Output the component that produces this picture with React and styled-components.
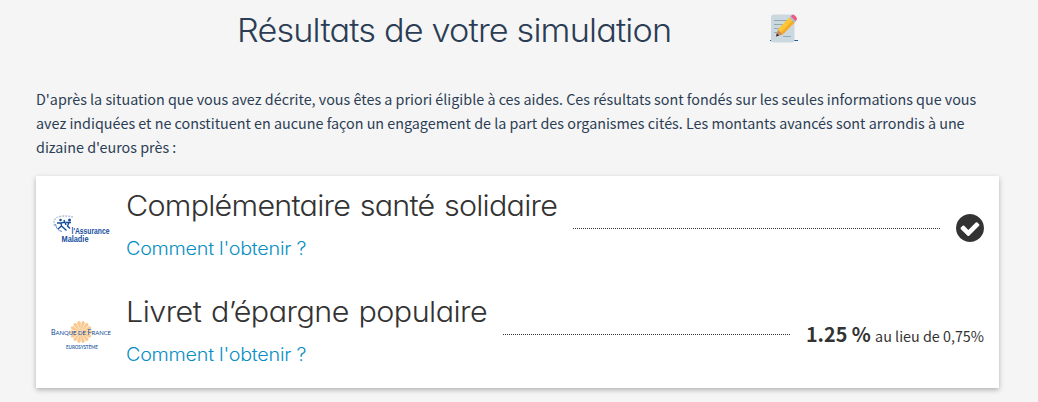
import React from "react";
import styled, { createGlobalStyle } from "styled-components";

const GlobalStyle = createGlobalStyle`
  * { box-sizing: border-box; }
  body {
    margin: 0;
    background: #f5f5f5;
    color: #2b3d54;
    font-family: "Noto Sans CJK SC", "Noto Sans", sans-serif;
    font-size: 14.33px;
    overflow: hidden;
  }
  h1, h2, p { margin: 0; }
`;

const Page = styled.main`
  width: 1038px;
  padding: 8px 39px 14px 36px;
`;

const Header = styled.header`
  display: flex;
  align-items: flex-start;
  padding-left: 201px;
  height: 79px;
`;

const PageTitle = styled.h1`
  width: 533px;
  padding-top: 1px;
  font: 300 32px/44px Inter, sans-serif;
  font-feature-settings: "cv11";
  letter-spacing: -0.78px;
  white-space: nowrap;
  transform: scaleX(1.07);
  transform-origin: left;
`;

const EditLink = styled.a`
  display: block;
  width: 28px;
  height: 34px;
  margin-top: 2px;
  svg { display: block; }
`;

const Intro = styled.p`
  line-height: 24px;
  white-space: nowrap;
  margin-bottom: 17px;
`;

const Card = styled.section`
  background: #fff;
  box-shadow: 0 2px 5px rgba(0, 0, 0, 0.28);
  color: #333;
`;

const Row = styled.article`
  display: flex;
  align-items: center;
  height: 106px;
  padding: 0 15px;
`;

const Logo = styled.svg`
  flex: none;
  width: 60px;
  height: 40px;
  margin-right: 15px;
  overflow: visible;
`;

const Details = styled.div`
  flex: none;
  width: ${(p) => p.$width}px;
  height: 80px;
  font-family: Inter, sans-serif;
  font-feature-settings: "cv11";
  white-space: nowrap;
`;

const AidName = styled.h2`
  font-size: 28.5px;
  font-weight: 300;
  line-height: 34px;
  letter-spacing: ${(p) => p.$tracking}px;
  word-spacing: 1.5px;
  transform: scaleX(1.07);
  transform-origin: left;
`;

const HowTo = styled.a`
  display: block;
  margin-top: 14px;
  color: #0a8fc4;
  font-size: 18px;
  font-weight: 300;
  line-height: 24px;
  letter-spacing: -0.25px;
  transform: scaleX(1.1);
  transform-origin: left;
`;

const Leader = styled.div`
  flex: 1;
  height: 1px;
  margin: 0 16px 2px;
  border-top: 1px dotted #333;
`;

const CheckMark = styled.svg`
  flex: none;
  width: 28px;
  height: 28px;
  margin-top: -3px;
`;

const Amount = styled.p`
  flex: none;
  line-height: 28px;
  white-space: nowrap;
`;

const Rate = styled.strong`
  margin-right: 1px;
  font-size: 19.8px;
  font-weight: 700;
`;

const CheckIcon = () => (
  <CheckMark viewBox="128 128 1536 1536" fill="#333">
    <path d="M1412 734q0-28-18-46l-91-90q-19-19-45-19t-45 19l-408 407-226-226q-19-19-45-19t-45 19l-91 90q-18 18-18 46 0 27 18 45l362 362q19 19 45 19 27 0 46-19l543-543q18-18 18-45zm252 162q0 209-103 385.5t-279.5 279.5-385.5 103-385.5-103-279.5-279.5-103-385.5 103-385.5 279.5-279.5 385.5-103 385.5 103 279.5 279.5 103 385.5z" />
  </CheckMark>
);

const EditIcon = () => (
  <svg width="28" height="34" viewBox="0 0 28 34">
    <path d="M0 30.5H28" stroke="#17599b" strokeWidth="1" />
    <rect x="1" y="4.5" width="23.5" height="28" rx="2.5" fill="#cbd8df" />
    <path
      d="M4 10.5H20M4 14.5H17M4 18.5H14M4 22.5H11M13 26.5H21"
      stroke="#95a8b1"
      strokeWidth="1.2"
    />
    <path d="M6 26.5L8 19.5L12.8 24.3Z" fill="#c98b60" />
    <path d="M6 26.5L6.8 23.3L9.3 25.6Z" fill="#40302c" />
    <path d="M7.8 19.3L20 7L25 12L12.8 24.5Z" fill="#fdc637" />
    <path d="M10.8 22.3L23 10L25 12L12.8 24.5Z" fill="#f5ac2d" />
    <path d="M19.2 7.8L21.5 5.5L26.5 10.5L24.2 12.8Z" fill="#b4bec4" />
    <path
      d="M20.8 6.2L22 5Q23.2 4 24.6 5.3L26.4 7.3Q27.5 8.5 26.6 9.9L25.5 11Z"
      fill="#ef5a83"
    />
  </svg>
);

const AssuranceLogo = () => (
  <Logo viewBox="0 0 60 40" fill="#164e9c">
    <path
      d="M3.500 17Q1.500 10 7 8Q13 6 22 8"
      fill="none"
      stroke="#a9bddd"
      strokeWidth="1.300"
      strokeDasharray="2 1"
    />
    <circle cx="9.500" cy="11" r="1.300" />
    <circle cx="18.500" cy="11" r="1.500" />
    <path
      d="M6 14L10 14L14 13M10 14L10.500 17L7 20M10.500 17L15.500 21.500M15 13.500L20 13.500M18 13.500L16.500 17L19 19.500M13 11L15 16"
      fill="none"
      stroke="#164e9c"
      strokeWidth="1.400"
    />
    <path d="M4.500 15Q5.500 21.500 11 22.500" fill="none" stroke="#6085bd" />
    <g
      fontFamily="Liberation Sans, sans-serif"
      fontWeight="700"
      fontSize="8.200"
    >
      <text x="20.500" y="24.500" textLength="38" lengthAdjust="spacingAndGlyphs">
        l'Assurance
      </text>
      <text x="10.500" y="32.500" textLength="27" lengthAdjust="spacingAndGlyphs">
        Maladie
      </text>
    </g>
  </Logo>
);

const rays = Array.from({ length: 14 }, (_, i) => (i + 0.5) * (360 / 14));

const BanqueLogo = () => (
  <Logo viewBox="0 0 60 40">
    <g fill="#f9c98f">
      {rays.map((angle) => (
        <path
          key={angle}
          d="M30 17L28.200 7.500Q30 4 31.800 7.500Z"
          transform={`rotate(${angle} 30 17)`}
        />
      ))}
    </g>
    <g fill="#0d4a9a" fontFamily="Lato, sans-serif">
      <text
        y="19.500"
        x="0"
        fontSize="7.400"
        textLength="60"
        lengthAdjust="spacingAndGlyphs"
      >
        B<tspan fontSize="6.200">ANQUE DE </tspan>F<tspan fontSize="6.200">RANCE</tspan>
      </text>
      <text x="15" y="34" fontSize="4.600" fontWeight="700" textLength="32" fill="#3f70ae">
        EUROSYSTÈME
      </text>
    </g>
  </Logo>
);

export default function App() {
  return (
    <>
      <GlobalStyle />
      <Page>
        <Header>
          <PageTitle>Résultats de votre simulation</PageTitle>
          <EditLink aria-label="Modifier">
            <EditIcon />
          </EditLink>
        </Header>
        <Intro>
          D'après la situation que vous avez décrite, vous êtes a priori éligible à ces
          aides. Ces résultats sont fondés sur les seules informations que vous
          <br />
          avez indiquées et ne constituent en aucune façon un engagement de la part des
          organismes cités. Les montants avancés sont arrondis à une
          <br />
          dizaine d'euros près :
        </Intro>
        <Card>
          <Row>
            <AssuranceLogo />
            <Details $width={431}>
              <AidName $tracking={-0.7}>Complémentaire santé solidaire</AidName>
              <HowTo>Comment l'obtenir ?</HowTo>
            </Details>
            <Leader />
            <CheckIcon />
          </Row>
          <Row>
            <BanqueLogo />
            <Details $width={361}>
              <AidName $tracking={-0.5}>Livret d’épargne populaire</AidName>
              <HowTo>Comment l'obtenir ?</HowTo>
            </Details>
            <Leader />
            <Amount>
              <Rate>1.25 %</Rate> au lieu de 0,75%
            </Amount>
          </Row>
        </Card>
      </Page>
    </>
  );
}
